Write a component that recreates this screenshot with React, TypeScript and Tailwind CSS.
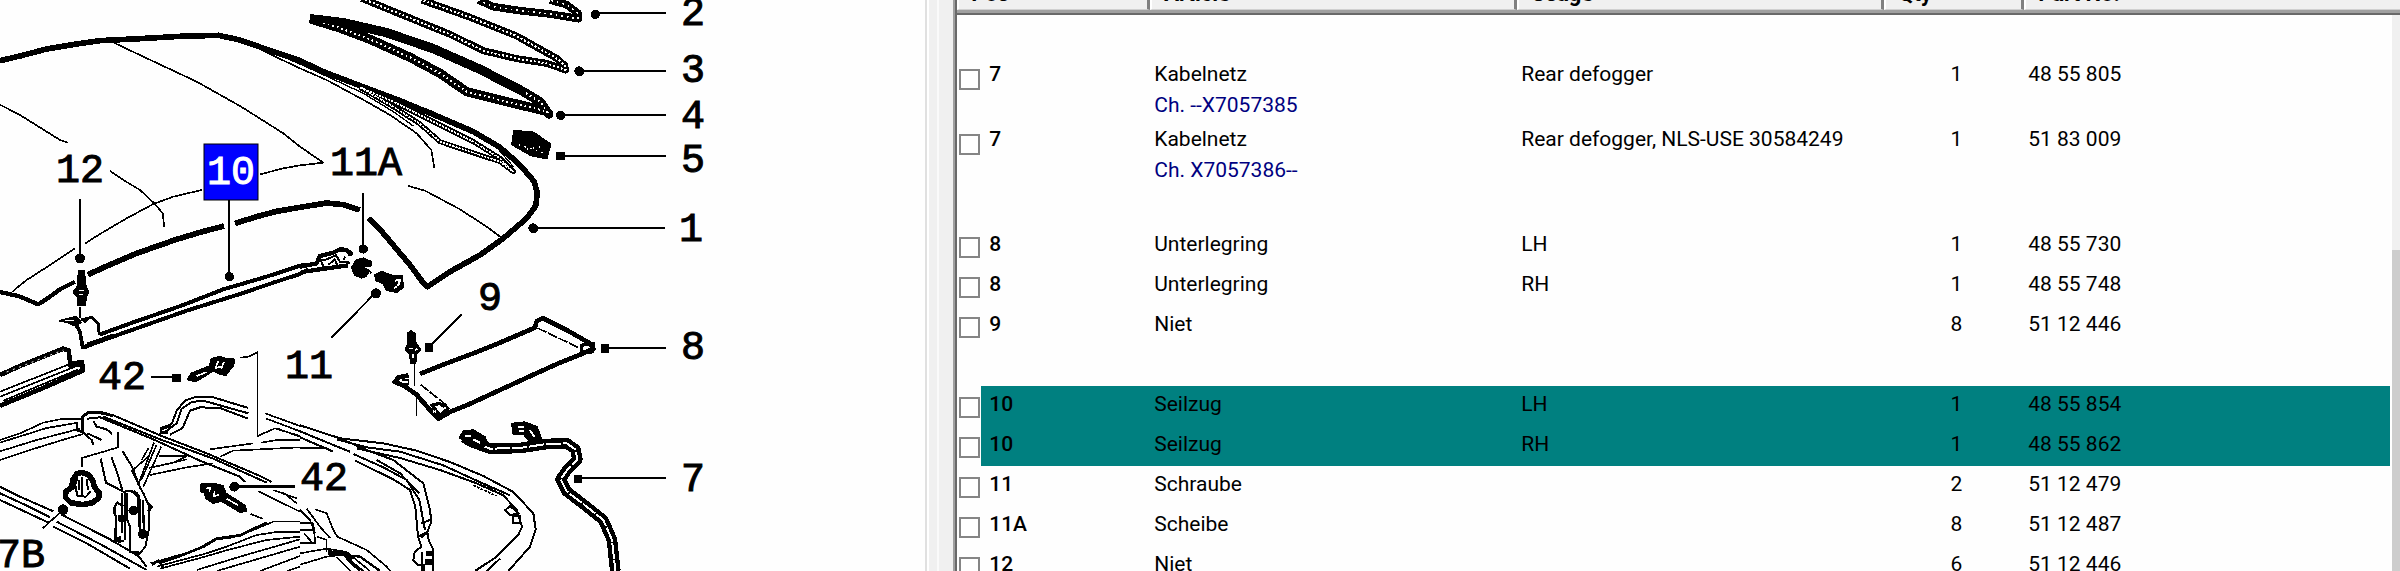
import React, { useState } from "react";

type Part = {
  id: string;
  pos: string;
  article: string;
  chassis?: string;
  usage?: string;
  qty: number;
  partNo: string;
};

const groups: Part[][] = [
  [
    { id: "p1", pos: "7", article: "Kabelnetz", chassis: "Ch. --X7057385", usage: "Rear defogger", qty: 1, partNo: "48 55 805" },
    { id: "p2", pos: "7", article: "Kabelnetz", chassis: "Ch. X7057386--", usage: "Rear defogger, NLS-USE 30584249", qty: 1, partNo: "51 83 009" },
  ],
  [
    { id: "p3", pos: "8", article: "Unterlegring", usage: "LH", qty: 1, partNo: "48 55 730" },
    { id: "p4", pos: "8", article: "Unterlegring", usage: "RH", qty: 1, partNo: "48 55 748" },
    { id: "p5", pos: "9", article: "Niet", qty: 8, partNo: "51 12 446" },
  ],
  [
    { id: "p6", pos: "10", article: "Seilzug", usage: "LH", qty: 1, partNo: "48 55 854" },
    { id: "p7", pos: "10", article: "Seilzug", usage: "RH", qty: 1, partNo: "48 55 862" },
    { id: "p8", pos: "11", article: "Schraube", qty: 2, partNo: "51 12 479" },
    { id: "p9", pos: "11A", article: "Scheibe", qty: 8, partNo: "51 12 487" },
    { id: "p10", pos: "12", article: "Niet", qty: 6, partNo: "51 12 446" },
  ],
];

const callouts = [
  { text: "2", x: 681, y: 25 },
  { text: "3", x: 681, y: 82 },
  { text: "4", x: 681, y: 128 },
  { text: "5", x: 681, y: 172 },
  { text: "1", x: 679, y: 241 },
  { text: "8", x: 681, y: 359 },
  { text: "7", x: 681, y: 491 },
  { text: "9", x: 478, y: 310 },
  { text: "12", x: 56, y: 182 },
  { text: "11A", x: 330, y: 175 },
  { text: "11", x: 285, y: 378 },
  { text: "42", x: 98, y: 389 },
  { text: "42", x: 300, y: 490 },
  { text: "7B", x: -3, y: 567 },
];

// seal strips are drawn as a thick line with a dotted light core
function Strip({ d, w = 19, core = 6, gap = "6 6" }: { d: string; w?: number; core?: number; gap?: string }) {
  return (
    <>
      <path d={d} strokeWidth={w} />
      <path d={d} stroke="#fefefe" strokeWidth={core} strokeDasharray={gap} />
    </>
  );
}

// cables and rods: black line with a solid light core
function Tube({ d, w, core }: { d: string; w: number; core: number }) {
  return (
    <>
      <path d={d} strokeWidth={w} />
      <path d={d} stroke="#fefefe" strokeWidth={core} strokeDasharray="46 5" />
    </>
  );
}

function Drawing({ selected }: { selected: string }) {
  return (
    <svg width="926" height="571" viewBox="0 0 926 571" className="block" role="img" aria-label="Soft top parts">
      {/* line work uses 3 units per pixel */}
      <g transform="scale(0.33333)" fill="none" stroke="#000" strokeWidth="5" strokeLinejoin="round" shapeRendering="crispEdges">
        {/* roof */}
        <g strokeWidth="17">
          <path d="M0 182L60 168L140 147L230 132L300 122L420 116L540 109L655 106L720 120L800 148L900 182L970 215L1080 257L1200 302L1320 352L1420 395L1500 442L1560 495L1603 545L1612 580L1607 618L1580 655L1510 715L1440 765L1350 815L1283 860L1273 853L1230 795L1150 700L1106 655" />
          <path d="M1080 630L1030 614L980 609L900 622L830 634L770 650L705 670" />
          <path d="M672 678L600 697L530 718L410 760L330 794L264 824" />
          <path d="M225 845L180 868L150 890L115 913L55 888L0 876" strokeWidth="13" />
        </g>
        <path d="M335 125L430 170L590 245L720 318L850 400L900 440L970 488L900 496L850 505L780 523" />
        <path d="M605 570L520 590L460 612L380 655L300 702L256 730M225 745L150 795L80 840L45 868L38 876" />
        <path d="M0 314L60 345L140 395L180 420L203 428M330 513L370 540L420 570L465 612L488 640L493 682" />
        <path d="M760 138L830 172L900 205L980 240L1100 305L1170 345L1250 400L1294 450L1303 503" />
        <path d="M800 150L900 192L1000 238L1090 280L1180 335L1240 378" strokeWidth="4" />
        <Strip w={15} core={5} gap="7 3" d="M1080 262L1180 320L1260 372L1320 425L1400 452L1500 485L1540 515L1500 475L1420 425L1300 365L1180 305L1080 262" />
        <path d="M1225 558L1275 572L1380 628L1460 680L1503 712" />
        <path d="M1180 290L1300 335L1400 385L1480 430L1540 500" strokeWidth="4" />

        {/* seal strips 2, 3, 4 */}
        <Strip w={23} core={5} gap="5 12" d="M1435 0L1480 20L1560 32L1650 42L1735 56L1734 40L1700 14L1650 0" />
        <Strip w={21} core={6} d="M1085 -5L1200 42L1350 103L1450 152L1550 176L1640 190L1697 210L1694 196L1670 175L1550 108L1400 48L1265 0" />
        <Strip w={28} core={6} gap="5 9" d="M930 56L1020 84L1110 118L1230 172L1320 220L1400 275L1520 305L1640 334L1646 342L1620 305L1570 275L1440 208L1300 146L1160 98L1030 68L930 56" />
        <path d="M930 56L1030 72L1160 97L1300 144L1440 206L1570 274" strokeWidth="14" />
        {/* 5 */}
        <path d="M1542 392L1600 397L1652 432L1640 476L1592 466L1536 434Z" fill="#000" />
        <path d="M1556 434L1640 462M1580 448L1630 440" stroke="#fefefe" strokeWidth="5" strokeDasharray="5 13" />

        {/* leaders */}
        <g strokeWidth="6">
          <path d="M1800 40H1998M1740 214H1998M1684 346H1998M1684 467H1998M1600 685H1995M1815 1045H1998M1735 1435H1998" />
          <path d="M240 597V765M688 600V820M1090 580V735M994 1013L1125 880M1385 944L1288 1040M452 1132H520" />
        </g>
        <path d="M703 1460H885" strokeWidth="9" />
        <g fill="#000" stroke="none">
          <circle cx="1786" cy="43" r="14" />
          <circle cx="1738" cy="214" r="15" />
          <circle cx="1682" cy="346" r="14" />
          <rect x="1668" y="457" width="26" height="24" />
          <circle cx="1600" cy="685" r="15" />
          <rect x="1803" y="1033" width="25" height="26" />
          <rect x="1723" y="1425" width="23" height="24" />
          <circle cx="240" cy="775" r="15" />
          <circle cx="688" cy="830" r="14" />
          <circle cx="1090" cy="747" r="14" />
          <circle cx="1128" cy="880" r="15" />
          <rect x="1276" y="1030" width="22" height="26" />
          <rect x="515" y="1122" width="27" height="24" />
          <circle cx="703" cy="1460" r="15" />
          <circle cx="189" cy="1529" r="16" />
        </g>

        {/* 12: rivet and bracket */}
        <path d="M236 812H252L258 862L266 874L258 892L256 915H233V892L220 876L232 860Z" fill="#000" />
        <path d="M236 872H252M236 884H248" stroke="#fefefe" />
        <path d="M240 922V955" />
        <path d="M178 962L228 950L244 968L222 976L205 968Z" fill="#000" />
        <path d="M196 962H222" stroke="#fefefe" strokeWidth="4" />
        <path d="M228 974L240 996L248 1042L262 1040" strokeWidth="11" />
        <path d="M244 960L275 952L294 970L298 1004M262 955L252 968" strokeWidth="9" />

        {/* 10: cable */}
        <path d="M298 1004L400 967L550 915L670 868L800 830L900 797L942 792" strokeWidth="12" />
        <path d="M250 1042L350 1006L560 932L720 882L820 848L900 822L925 808" strokeWidth="12" />
        <path d="M262 1030L340 1003" />
        <path d="M900 800L950 790L960 768L1000 758L1020 748L1040 750L1052 760L1050 768M905 816L960 808L1045 796" strokeWidth="13" />
        <path d="M950 785L980 778L1008 766L1020 785L1050 788M985 795L1004 778L1012 796M962 780L970 800M1036 770L1030 780" strokeWidth="6" />

        {/* 11A washer, 11 screw */}
        <path d="M1112 785L1090 775L1068 782L1056 802L1064 824L1084 833L1098 828L1108 812L1094 814L1090 800L1112 798Z" fill="#000" strokeWidth="6" />
        <path d="M1096 806L1108 812L1114 820" />
        <path d="M1125 825L1145 815L1180 828L1206 828L1210 862L1190 877L1160 870L1150 850L1128 842Z" fill="#000" />
        <path d="M1184 842L1200 840L1194 858M1182 864L1190 860" stroke="#fefefe" strokeWidth="6" />

        {/* left moulding */}
        <path d="M0 1125L60 1098L190 1046L206 1052L211 1092L246 1086L248 1112L120 1168L0 1217" strokeWidth="14" />
        <path d="M20 1116L190 1050" stroke="#fefefe" strokeWidth="3" strokeDasharray="6 14" />
        <path d="M0 1175L205 1094M0 1190L225 1100M10 1202L235 1108" />
        <path d="M205 1098L245 1092" strokeWidth="14" />

        {/* 42 upper */}
        <path d="M565 1138L575 1122L630 1100L636 1078L660 1072L685 1080L702 1080L698 1096L676 1124L655 1118L640 1110L588 1142Z" fill="#000" strokeWidth="9" />
        <path d="M655 1084L646 1104L662 1100M672 1086L664 1106M590 1128L620 1116" stroke="#fefefe" strokeWidth="5" />
        <path d="M720 1073L745 1070L773 1057V1310M773 1308L825 1285L900 1308" />

        {/* 42 lower */}
        <path d="M604 1454L640 1452L668 1458L676 1480L735 1518L738 1532L722 1536L664 1502L640 1508L618 1494L616 1478L604 1474Z" fill="#000" strokeWidth="7" />
        <path d="M618 1466L630 1462L628 1476M644 1474L640 1490L656 1484M680 1496L714 1516" stroke="#fefefe" strokeWidth="5" />
        <path d="M752 1542L788 1556" />

        {/* grommet 7B */}
        <path d="M216 1462L218 1440L230 1422L246 1417L266 1424L278 1442L284 1462L297 1478L296 1494L278 1508L248 1514L212 1508L196 1492L198 1474Z" strokeWidth="17" />
        <path d="M232 1432L226 1455L232 1488L258 1490L272 1474M246 1432V1486M238 1440V1470M260 1436L264 1470" strokeWidth="6" />
        <path d="M178 1540L128 1585" />
        <path d="M246 1402V1374L355 1342V1296" />

        {/* frame, left hand side */}
        <path d="M0 1320L60 1300L130 1268L180 1258L245 1256M0 1328L70 1306L140 1284L235 1268M0 1354L110 1320L240 1286M0 1380L90 1350L200 1316L250 1302M20 1322L50 1312" />
        <path d="M246 1298L248 1250L264 1238H306L340 1248" strokeWidth="9" />
        <path d="M300 1240L340 1246L480 1306L620 1360L780 1428L815 1446" strokeWidth="6" />
        <path d="M262 1256L300 1252L460 1318L600 1382L720 1430L735 1446M310 1250L480 1318L640 1376L800 1448" strokeWidth="6" />
        <path d="M250 1298L275 1320L280 1335M262 1300L305 1320M280 1262L290 1280L320 1288L336 1302M232 1268V1292H244" strokeWidth="6" />
        <path d="M480 1308L484 1284L515 1272L530 1232L555 1202L590 1190L640 1192L745 1224M490 1300L530 1270L545 1226L575 1206L610 1202L745 1240M510 1304L548 1284L570 1232L600 1222L660 1224L745 1256" strokeWidth="6" />
        <path d="M484 1286L512 1278M482 1296L505 1298" strokeWidth="9" />
        <path d="M795 1240L900 1278M797 1255L900 1294M830 1285L900 1310" />
        <path d="M462 1328L414 1456M484 1340L430 1460M470 1334L424 1440M445 1370L396 1412L424 1470M445 1345L425 1380M478 1368H560L520 1388L465 1400M450 1425L560 1402L640 1390M446 1404L520 1388L560 1378M630 1348L760 1330M660 1370L700 1352L820 1346L900 1342M784 1328L830 1320H900" />
        <path d="M0 1460L60 1490L160 1534M0 1480L70 1512L150 1552M0 1500L60 1528L146 1568M185 1544L330 1618L415 1668L440 1700M170 1565L300 1632L440 1710M160 1580L260 1630L390 1706" strokeWidth="6" />

        {/* hinge */}
        <path d="M302 1376L318 1448L376 1478L376 1620M334 1370L352 1420L368 1474M368 1354L396 1400L420 1462L430 1480M390 1474L412 1480L420 1500V1590M430 1480L448 1520L446 1590L436 1640L418 1662L390 1656V1580L382 1560V1480M376 1474H400" strokeWidth="6" />
        <path d="M344 1520L352 1508L370 1518M344 1520V1540L348 1550L346 1620L338 1624L372 1622M366 1480V1600M428 1500L432 1590" strokeWidth="7" />
        <g fill="#000">
          <circle cx="400" cy="1532" r="12" />
          <circle cx="364" cy="1555" r="9" />
          <circle cx="428" cy="1602" r="12" />
          <path d="M340 1622L362 1610L360 1626Z" />
          <path d="M390 1654L416 1656L410 1666Z" />
        </g>
        <path d="M400 1474L416 1490L418 1580M444 1510L454 1520L446 1534" strokeWidth="9" />

        {/* lower hood frame */}
        <path d="M452 1690L520 1670L580 1654L640 1620L700 1612L760 1590L820 1565L900 1565M470 1700L560 1676L620 1660L680 1640L770 1605L830 1596L900 1596M480 1706L600 1674L690 1648L800 1620L900 1610M590 1710L720 1670L900 1618M650 1713L900 1640M780 1713L900 1668M860 1713L900 1700" />
        <path d="M456 1694L476 1682L490 1702M476 1690L540 1668L610 1640L650 1616L720 1606L800 1568" strokeWidth="8" />
        <path d="M775 1474L900 1535M820 1470L890 1495M850 1478L890 1510" />

        {/* frame, right hand side */}
        <path d="M900 1276L1020 1315L1150 1330L1250 1352L1350 1386L1450 1428L1540 1476L1600 1540L1607 1588L1590 1640L1525 1713" strokeWidth="6" />
        <path d="M1010 1318L1100 1342L1200 1355L1330 1396L1430 1442L1530 1486M1070 1345L1200 1374L1320 1410L1430 1450L1510 1486L1550 1530L1566 1580L1555 1605L1490 1670L1425 1713M1500 1676L1460 1713" strokeWidth="6" />
        <path d="M1420 1456L1490 1488M1440 1450L1500 1480" strokeDasharray="8 4" />
        <path d="M900 1294L1000 1335L1050 1355M900 1312L1000 1355M900 1344H980M1060 1362L1150 1402L1220 1440L1258 1500L1275 1590M1065 1382L1180 1438L1230 1470L1246 1520L1254 1610M1020 1315L1100 1350L1180 1380L1270 1450L1290 1530L1294 1565L1282 1596M1130 1380L1200 1420L1258 1480" strokeWidth="6" />
        <path d="M1254 1610L1282 1596L1286 1620L1300 1650V1713M1254 1610L1264 1640L1244 1656L1240 1680L1252 1694H1272V1713M1266 1655V1713M1290 1560L1264 1570M1280 1600L1264 1612" strokeWidth="6" />
        <path d="M1280 1655H1300V1666H1280ZM1278 1680H1300V1692H1278Z" fill="#000" />
        <path d="M1516 1530L1530 1518L1556 1540L1530 1546ZM1538 1548H1560V1568H1538Z" strokeWidth="6" />
        <path d="M900 1530L930 1560L946 1600M920 1526L960 1580L990 1614M944 1528L980 1540L1000 1590L1012 1610L1100 1650L1160 1700L1170 1713M900 1570H940L946 1630H900M900 1590H944M912 1600L934 1625M950 1610L980 1620V1656M900 1660L980 1646L1040 1656L1110 1713M900 1694L980 1670L1030 1664L1090 1713M1010 1672L1052 1713" />
        <path d="M984 1658L1030 1660L1056 1680" strokeWidth="14" />
        <path d="M1020 1664L1080 1670L1140 1713M1040 1676L1080 1713" strokeWidth="7" />

        {/* 9: rivet */}
        <path d="M1224 1000L1234 994L1246 1004V1028L1260 1048L1248 1062L1246 1088H1234L1230 1062L1218 1048L1226 1028Z" fill="#000" strokeWidth="7" />
        <path d="M1228 1046H1238M1244 1052L1252 1046M1240 1062V1074" stroke="#fefefe" />
        <path d="M1244 1092V1158M1250 1195V1248" />

        {/* 8: plate */}
        <path d="M1260 1122L1340 1090L1420 1060L1500 1028L1605 983L1610 964L1628 954L1700 990L1770 1030L1780 1046L1750 1060L1680 1088L1600 1124L1500 1170L1400 1216L1350 1236L1315 1256L1295 1236L1250 1184L1210 1156L1184 1146L1196 1132L1226 1126" strokeWidth="14" />
        <path d="M1612 984L1738 1044M1262 1154L1340 1216" strokeDasharray="30 5" />
        <path d="M1744 1036L1780 1030L1776 1056L1746 1056ZM1296 1216L1318 1210L1344 1226L1320 1246Z" strokeWidth="10" />
        <path d="M1206 1140H1226V1152H1206" />
        <path d="M1300 1236L1340 1222" stroke="#fefefe" strokeDasharray="8 8" />

        {/* 7: cable harness */}
        <Tube w={32} core={6} d="M1390 1312L1420 1328L1470 1346L1560 1344L1640 1332L1700 1330L1726 1348L1732 1378L1700 1412L1682 1438L1700 1474L1760 1520L1810 1560L1836 1620L1846 1713" />
        <path d="M1380 1312L1392 1294L1420 1292L1454 1312L1462 1334L1430 1340L1400 1326Z" fill="#000" strokeWidth="8" />
        <path d="M1396 1308H1412M1420 1318L1440 1328" stroke="#fefefe" strokeWidth="6" />
        <path d="M1538 1272L1574 1268L1610 1282L1622 1316L1590 1324L1572 1302L1540 1300Z" fill="#000" strokeWidth="8" />
        <path d="M1554 1282L1572 1280M1556 1292H1572M1590 1290L1604 1312" stroke="#fefefe" strokeWidth="6" />
      </g>

      <rect x="204" y="144" width="54" height="56" fill="#0000ff" stroke="#000" />
      <g fontFamily='"Liberation Mono", monospace' fontSize="40">
        <text x="207" y="184" fill="#fff" stroke="#fff">{selected}</text>
        {callouts.map((c) => (
          <text key={c.text + c.y} x={c.x} y={c.y} fill="#000" stroke="#000">{c.text}</text>
        ))}
      </g>
    </svg>
  );
}

function HeaderCell({ title, span, last }: { title: string; span?: number; last?: boolean }) {
  return (
    <th
      colSpan={span}
      scope="col"
      className={
        "p-0 h-[10px] border-l-2 border-l-white border-b border-b-[#d0d0d0] bg-[#f0f0f0] text-left align-bottom " +
        (last ? "" : "border-r-3 border-r-[#808080]")
      }
    >
      <div className="h-[9px] overflow-hidden flex items-end pl-3 text-[22px] leading-[30px] font-bold">
        <span>{title}</span>
      </div>
    </th>
  );
}

function PartRow({ part, selected }: { part: Part; selected: boolean }) {
  const [checked, setChecked] = useState(false);
  const bg = selected ? "bg-[#008080]" : "";
  return (
    <tr className={part.chassis ? "h-[65px] align-top" : "h-10 align-top"}>
      <td className={part.chassis ? "p-0 pl-[2px] pt-[13px]" : "p-0 pl-[2px] pt-[11px]"}>
        <input
          type="checkbox"
          id={part.id}
          checked={checked}
          onChange={() => setChecked(!checked)}
          className="block appearance-none h-[21px] w-[21px] border-2 border-[#858585] bg-white checked:bg-[#008080]"
        />
      </td>
      <td className={`p-0 pt-[3px] pl-2 font-medium ${bg}`}>
        <label htmlFor={part.id}>{part.pos}</label>
      </td>
      <td className={`p-0 pt-[3px] pl-1 ${bg}`}>
        {part.article}
        {part.chassis && <div className="text-[#000080]">{part.chassis}</div>}
      </td>
      <td className={`p-0 pt-[3px] pl-1 ${bg}`}>{part.usage}</td>
      <td className={`p-0 pt-[3px] pr-[62px] text-right ${bg}`}>{part.qty}</td>
      <td className={`p-0 pt-[3px] pl-1 ${bg}`}>{part.partNo}</td>
    </tr>
  );
}

export default function App() {
  const selected = "10";
  return (
    <div className="flex h-screen overflow-hidden bg-[#fefefe] text-black">
      <div className="flex-[926] min-w-0 overflow-hidden">
        <Drawing selected={selected} />
      </div>

      {/* splitter */}
      <div className="flex w-7 shrink-0 bg-[#f0f0f0]">
        <div className="w-[2px] bg-[#e0e0e0]" />
        <div className="w-[2px] bg-white" />
        <div className="w-2" />
        <div className="w-[2px] bg-[#fafafa]" />
      </div>

      <div className="relative flex-[1446] min-w-0 overflow-hidden border-l-2 border-[#a0a0a0]">
        <table className="w-full table-fixed border-separate border-spacing-0 border-l-2 border-[#696969] font-['Roboto',sans-serif] text-[21px] leading-[31px]">
          <colgroup>
            <col className="w-6" />
            <col className="w-[169px]" />
            <col className="w-[367px]" />
            <col className="w-[367px]" />
            <col className="w-[140px]" />
            <col />
          </colgroup>
          <thead>
            <tr>
              <HeaderCell title="Pos" span={2} />
              <HeaderCell title="Article" />
              <HeaderCell title="Usage" />
              <HeaderCell title="Qty" />
              <HeaderCell title="Part No." last />
            </tr>
            <tr>
              <td colSpan={6} className="h-[5px] p-0 border-b-2 border-[#696969] bg-[#a0a0a0]" />
            </tr>
          </thead>
          {groups.map((group, i) => (
            <tbody key={i}>
              <tr>
                <td colSpan={6} className={i === 0 ? "h-[41px] p-0" : "h-10 p-0"} />
              </tr>
              {group.map((part) => (
                <PartRow key={part.id} part={part} selected={part.pos === selected} />
              ))}
            </tbody>
          ))}
        </table>

        {/* scrollbar */}
        <div className="absolute top-[15px] bottom-0 right-0 w-[10px] border-l-2 border-white bg-[#f0f0f0] pt-[235px]">
          <div className="h-full bg-[#cdcdcd]" />
        </div>
      </div>
    </div>
  );
}
